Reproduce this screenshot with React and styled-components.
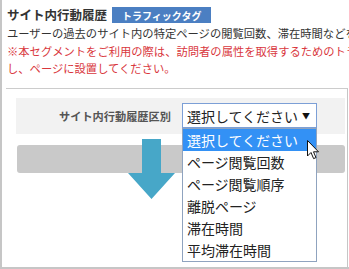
import React from "react";
import styled, { createGlobalStyle } from "styled-components";

const GlobalStyle = createGlobalStyle`
  html, body {
    margin: 0;
    padding: 0;
    background: #ffffff;
  }
  body {
    font-family: "Noto Sans CJK JP", "Noto Sans", sans-serif;
    color: #333333;
  }
`;

const Frame = styled.div`
  width: 349px;
  height: 269px;
  box-sizing: border-box;
  border-left: 2px solid #c6c6c6;
  border-bottom: 2px solid #c6c6c6;
  overflow: hidden;
  display: flex;
  flex-direction: column;
`;

const Header = styled.div`
  padding: 7px 0 0 5px;
`;

const TitleRow = styled.div`
  display: flex;
  align-items: center;
  gap: 5px;
  height: 16px;
`;

const Title = styled.h1`
  margin: 0;
  font-size: 12.5px;
  font-weight: 700;
  line-height: 16px;
  color: #333333;
`;

const Badge = styled.span`
  display: inline-flex;
  align-items: center;
  height: 16px;
  padding: 0 10px;
  background: #4b7fc2;
  color: #ffffff;
  font-size: 10px;
  font-weight: 700;
  letter-spacing: 0;
`;

const Line = styled.p`
  margin: 0;
  font-size: 11.3px;
  line-height: 17.5px;
  white-space: nowrap;
  color: ${(p) => (p.$warn ? "#d9373d" : "#333333")};
`;

const Desc = styled.div`
  margin-top: 2px;
`;

const Box = styled.div`
  flex: 1;
  margin: 10px 1px 0 4px;
  border-top: 1px solid #cccccc;
  border-right: 1px solid #c6c6c6;
  padding: 9px 2px 0 10px;
`;

const FormPanel = styled.div`
  height: 36px;
  background: #f2f2f2;
  display: flex;
  align-items: center;
  gap: 11px;
  padding-left: 43px;
`;

const Label = styled.span`
  font-size: 11.2px;
  font-weight: 700;
  color: #555555;
  white-space: nowrap;
`;

const SelectWrap = styled.div`
  position: relative;
  z-index: 2;
`;

const SelectBox = styled.div`
  width: 135px;
  height: 25px;
  box-sizing: border-box;
  border: 1px solid #7c9fd6;
  background: #ffffff;
  display: flex;
  align-items: center;
  justify-content: space-between;
  padding: 0 6px 0 4px;
  font-size: 14px;
  color: #222222;
`;

const Caret = styled.span`
  font-size: 8px;
  color: #111111;
`;

const DropList = styled.ul`
  position: absolute;
  top: 25px;
  left: 0;
  width: 135px;
  box-sizing: border-box;
  margin: 0;
  padding: 0;
  list-style: none;
  background: #ffffff;
  border: 1px solid #8fa3bf;
`;

const Option = styled.li`
  height: 22px;
  line-height: 22px;
  padding-left: 4px;
  font-size: 14px;
  white-space: nowrap;
  color: ${(p) => (p.$active ? "#ffffff" : "#222222")};
  background: ${(p) => (p.$active ? "#3391f5" : "transparent")};
`;

const Cursor = styled.svg`
  position: absolute;
  left: 125px;
  top: 37px;
`;

const ActionBar = styled.div`
  position: relative;
  height: 28px;
  margin: 11px 0 0 1px;
  background: #c9c9c9;
  border-radius: 3px;
`;

const Arrow = styled.svg`
  position: absolute;
  left: 111px;
  top: -6px;
`;

const options = [
  "選択してください",
  "ページ閲覧回数",
  "ページ閲覧順序",
  "離脱ページ",
  "滞在時間",
  "平均滞在時間",
];

const App = () => {
  return (
    <>
      <GlobalStyle />
      <Frame>
        <Header>
          <TitleRow>
            <Title>サイト内行動履歴</Title>
            <Badge>トラフィックタグ</Badge>
          </TitleRow>
          <Desc>
            <Line>ユーザーの過去のサイト内の特定ページの閲覧回数、滞在時間などを条件に設定します。</Line>
            <Line $warn>※本セグメントをご利用の際は、訪問者の属性を取得するためのトラッキングタグを発行</Line>
            <Line $warn>し、ページに設置してください。</Line>
          </Desc>
        </Header>
        <Box>
          <FormPanel>
            <Label>サイト内行動履歴区別</Label>
            <SelectWrap>
              <SelectBox>
                <span>選択してください</span>
                <Caret>▼</Caret>
              </SelectBox>
              <DropList>
                {options.map((o, i) => (
                  <Option key={o} $active={i === 0}>
                    {o}
                  </Option>
                ))}
              </DropList>
              <Cursor width="13" height="20" viewBox="0 0 13 20">
                <path
                  d="M0.5 0.5 L0.5 16 L4 12.5 L6.6 18.6 L9 17.6 L6.5 11.8 L11.5 11.8 Z"
                  fill="#ffffff"
                  stroke="#111111"
                  strokeWidth="1"
                  strokeLinejoin="round"
                />
              </Cursor>
            </SelectWrap>
          </FormPanel>
          <ActionBar>
            <Arrow width="48" height="60" viewBox="0 0 48 60">
              <path d="M14 0 H33 V34 H47 L23.5 60 L0 34 H14 Z" fill="#47a7c8" />
            </Arrow>
          </ActionBar>
        </Box>
      </Frame>
    </>
  );
};

export default App;
